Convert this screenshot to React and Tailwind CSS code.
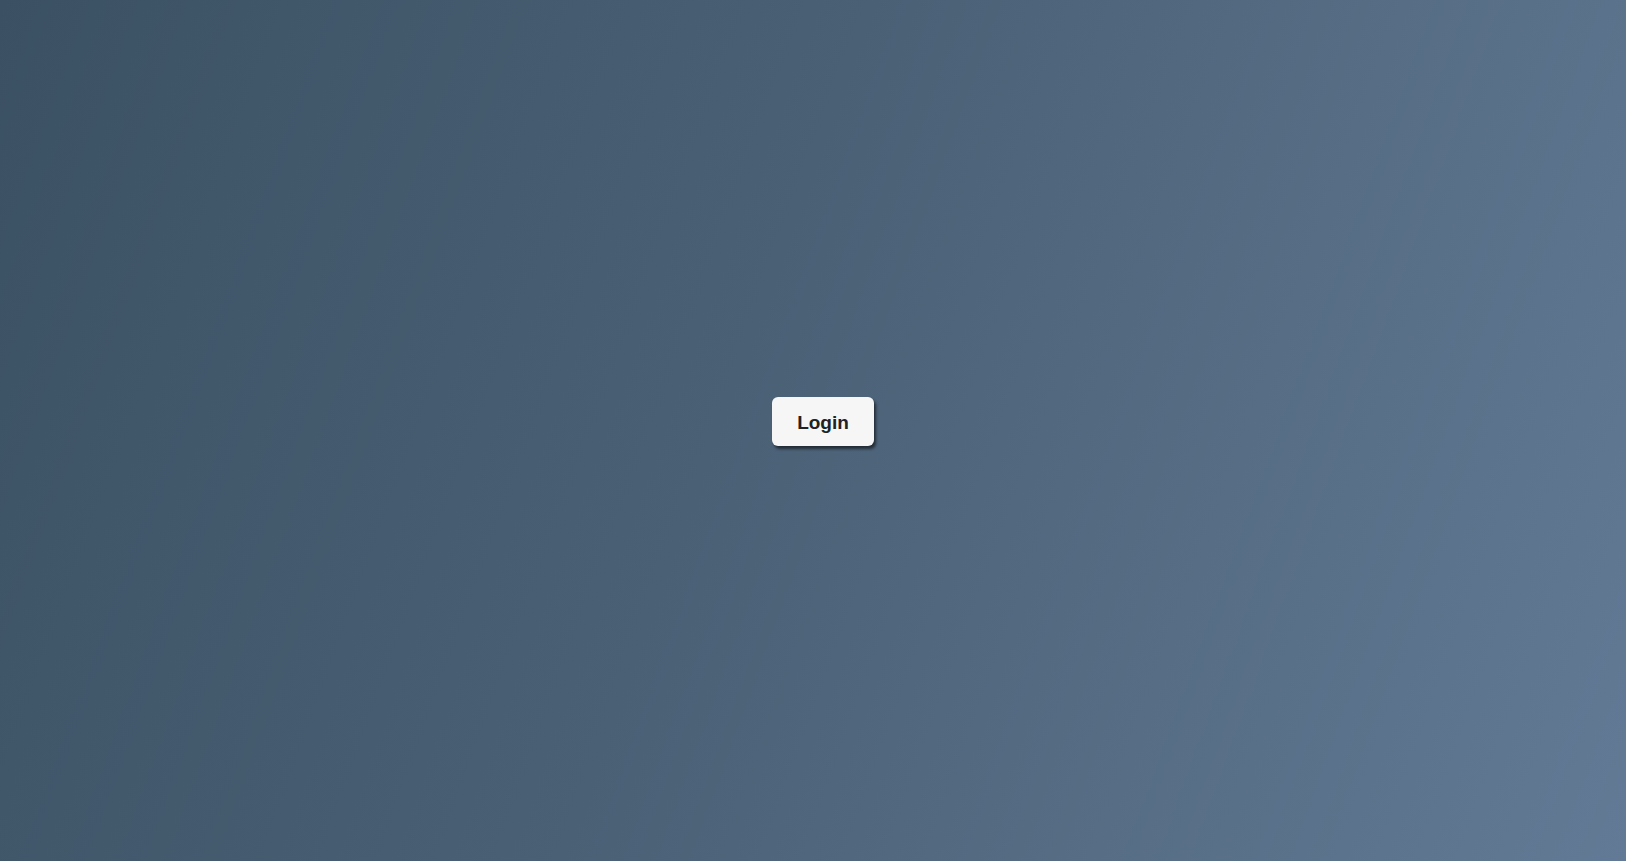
export default function App() {
  return (
    <div className="min-h-screen w-full flex items-center justify-center pl-[20px] pb-[18px] bg-[linear-gradient(110deg,#3b5163_0%,#4a6075_45%,#627a95_100%)]">
      <button className="w-[102px] h-[49px] pt-[4px] rounded-[6px] bg-[#f6f6f6] text-[#222] font-bold text-[19px] font-['Liberation_Sans',Arial,sans-serif] shadow-[2px_3px_3px_rgba(0,0,0,0.55)]">
        Login
      </button>
    </div>
  );
}
